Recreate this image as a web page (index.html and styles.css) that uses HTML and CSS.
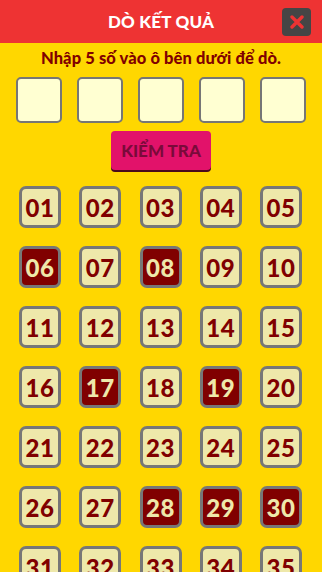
FILE: index.html
```html
<!DOCTYPE html>
<html lang="vi">
<head>
    <meta charset="UTF-8">
    <meta name="viewport" content="width=device-width, initial-scale=1.0">
    <title>Dò kết quả</title>
    <link rel="stylesheet" href="styles.css">
</head>
<body>

    <!-- Header -->
    <div class="header">
        <h1>DÒ KẾT QUẢ</h1>
        <button class="close-btn">
            <svg width="14" height="14" viewBox="0 0 14 14">
                <path d="M2 2 L12 12 M12 2 L2 12" stroke="#ee3333" stroke-width="3.4" stroke-linecap="round"/>
            </svg>
        </button>
    </div>

    <p class="hint">Nhập 5 số vào ô bên dưới để dò.</p>

    <!-- Input boxes -->
    <div class="inputs">
        <div class="input-box"></div>
        <div class="input-box"></div>
        <div class="input-box"></div>
        <div class="input-box"></div>
        <div class="input-box"></div>
    </div>

    <div class="check-row">
        <button class="check-btn">KIỂM TRA</button>
    </div>

    <!-- Number grid -->
    <div class="grid">
        <div class="num">01</div>
        <div class="num">02</div>
        <div class="num">03</div>
        <div class="num">04</div>
        <div class="num">05</div>
        <div class="num picked">06</div>
        <div class="num">07</div>
        <div class="num picked">08</div>
        <div class="num">09</div>
        <div class="num">10</div>
        <div class="num">11</div>
        <div class="num">12</div>
        <div class="num">13</div>
        <div class="num">14</div>
        <div class="num">15</div>
        <div class="num">16</div>
        <div class="num picked">17</div>
        <div class="num">18</div>
        <div class="num picked">19</div>
        <div class="num">20</div>
        <div class="num">21</div>
        <div class="num">22</div>
        <div class="num">23</div>
        <div class="num">24</div>
        <div class="num">25</div>
        <div class="num">26</div>
        <div class="num">27</div>
        <div class="num picked">28</div>
        <div class="num picked">29</div>
        <div class="num picked">30</div>
        <div class="num">31</div>
        <div class="num">32</div>
        <div class="num">33</div>
        <div class="num">34</div>
        <div class="num">35</div>
    </div>

</body>
</html>
```

FILE: styles.css
```css
* {
    box-sizing: border-box;
}

body {
    margin: 0;
    font-family: "Lato", "Noto Sans", sans-serif;
    background-color: #ffd700;
    color: #800000;
    overflow: hidden;
}

/* Top bar */
.header {
    height: 43px;
    background-color: #ee3333;
    display: flex;
    align-items: center;
    justify-content: center;
    position: relative;
}

.header h1 {
    margin: 0;
    color: #ffffff;
    font-size: 17px;
    font-weight: 900;
    letter-spacing: 0.2px;
}

.close-btn {
    position: absolute;
    top: 8px;
    right: 11px;
    width: 29px;
    height: 28px;
    border: none;
    border-radius: 4px;
    background-color: #454545;
    display: flex;
    align-items: center;
    justify-content: center;
    padding: 0;
}

.hint {
    margin: 5px 0 0;
    text-align: center;
    font-size: 16.5px;
    font-weight: 900;
    line-height: 21px;
    letter-spacing: 0.1px;
}

/* Five empty boxes */
.inputs {
    display: flex;
    gap: 15px;
    padding: 8px 0 0 16px;
}

.input-box {
    width: 46px;
    height: 46px;
    background-color: #ffffd2;
    border: 2px solid #767676;
    border-radius: 5px;
}

.check-row {
    display: flex;
    justify-content: center;
    padding-top: 8px;
}

.check-btn {
    width: 100px;
    height: 39px;
    border: none;
    border-radius: 4px;
    background-color: #e2126a;
    box-shadow: 0 2px 0 #4a0a1c;
    color: #7a0a3a;
    font-family: inherit;
    font-size: 17px;
    font-weight: 900;
    padding: 0;
}

/* Number tiles */
.grid {
    display: grid;
    grid-template-columns: repeat(5, 42px);
    column-gap: 18.25px;
    row-gap: 18px;
    padding: 16px 0 0 19px;
}

.num {
    width: 42px;
    height: 42px;
    background-color: #eee8aa;
    border: 3px solid #777777;
    border-radius: 7px;
    display: flex;
    align-items: center;
    justify-content: center;
    font-size: 24px;
    font-weight: 900;
    letter-spacing: 0.5px;
    color: #800000;
}

.num.picked {
    background-color: #800000;
    color: #eee8aa;
}
```
